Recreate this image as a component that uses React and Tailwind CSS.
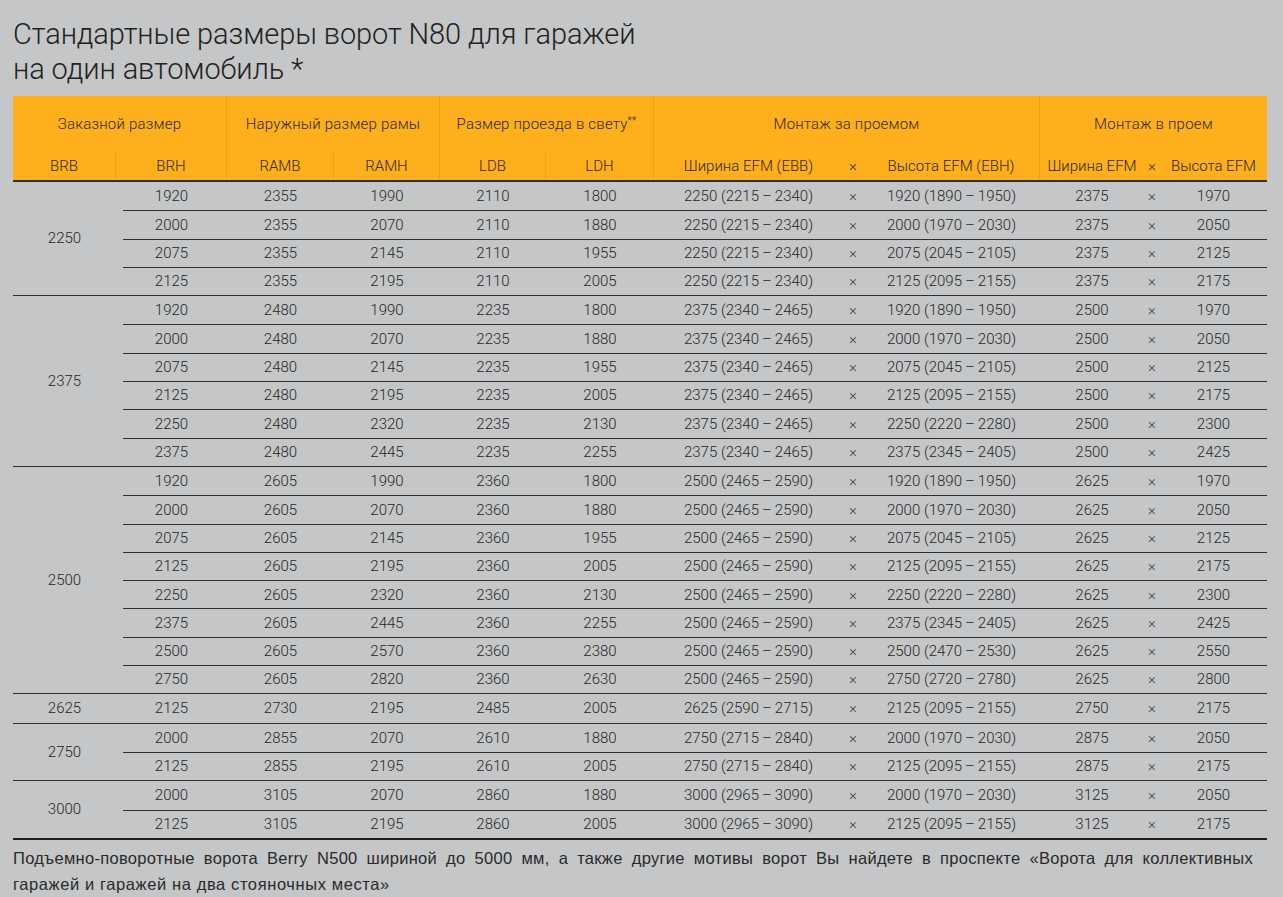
import React from 'react';

// Таблица стандартных размеров ворот N80
const groups = [
  { brb: 2250, brh: [1920, 2000, 2075, 2125] },
  { brb: 2375, brh: [1920, 2000, 2075, 2125, 2250, 2375] },
  { brb: 2500, brh: [1920, 2000, 2075, 2125, 2250, 2375, 2500, 2750] },
  { brb: 2625, brh: [2125] },
  { brb: 2750, brh: [2000, 2125] },
  { brb: 3000, brh: [2000, 2125] },
];

const range = (v, lo, hi) => `${v} (${v - lo}\u2009–\u2009${v + hi})`;

const HEAD_COLS = 'grid grid-cols-[103px_111px_107px_106px_106px_108px_189px_20px_177px_104px_16px_107px]';
const BODY_COLS = 'grid grid-cols-[104px_107px_106px_106px_108px_189px_20px_177px_104px_16px_107px]';

const Row = ({ brb, brh, first }) => {
  const cells = [
    brh,
    brb + 105,
    brh + 70,
    brb - 140,
    brh - 120,
    range(brb, 35, 90),
    '×',
    range(brh, 30, 30),
    brb + 125,
    '×',
    brh + 50,
  ];
  return (
    <div className={`${BODY_COLS} h-[28.3px] items-center ${first ? '' : 'border-t border-[#2e2e2e]'}`}>
      {cells.map((c, i) => (
        <div
          key={i}
          className={`text-center whitespace-nowrap ${i === 0 ? 'pr-[7px]' : ''} ${c === '×' ? 'text-[#3a3a3a]' : ''}`}
        >
          {c}
        </div>
      ))}
    </div>
  );
};

export default function App() {
  return (
    <div
      className="w-[1283px] h-[897px] bg-[#c5c6c8] text-[#262626] overflow-hidden"
      style={{ fontFamily: 'Roboto, "Liberation Sans", "Noto Sans", sans-serif' }}
    >
      <div className="ml-[13px] w-[1254px]">
        {/* Title */}
        <h1 className="pt-[17px] text-[29px] leading-[35px] font-light text-[#222] tracking-[-0.1px]">
          Стандартные размеры ворот N80 для гаражей
          <br />
          на один автомобиль *
        </h1>

        {/* Table head */}
        <div className="mt-[9px] bg-[#fdb01b] text-[15px] font-light text-[#33291a] tracking-[0.2px] border-b-2 border-[#3a3020]">
          <div className={`${HEAD_COLS} h-[56px] items-center`}>
            <div className="col-span-2 text-center self-stretch flex items-center justify-center border-r border-[#eda516]">
              Заказной размер
            </div>
            <div className="col-span-2 text-center self-stretch flex items-center justify-center border-r border-[#eda516]">
              Наружный размер рамы
            </div>
            <div className="col-span-2 text-center self-stretch flex items-center justify-center border-r border-[#eda516]">
              Размер проезда в свету<span className="text-[10px] relative -top-[4px]">**</span>
            </div>
            <div className="col-span-3 text-center self-stretch flex items-center justify-center border-r border-[#eda516]">
              Монтаж за проемом
            </div>
            <div className="col-span-3 text-center self-stretch flex items-center justify-center">
              Монтаж в проем
            </div>
          </div>
          <div className={`${HEAD_COLS} h-[28px] items-stretch`}>
            {[
              ['BRB', true],
              ['BRH', true],
              ['RAMB', true],
              ['RAMH', true],
              ['LDB', true],
              ['LDH', true],
              ['Ширина EFM (EBB)', false],
              ['×', false],
              ['Высота EFM (EBH)', true],
              ['Ширина EFM', false],
              ['×', false],
              ['Высота EFM', false],
            ].map(([label, div], i) => (
              <div
                key={i}
                className={`flex items-center justify-center whitespace-nowrap tracking-normal ${div ? 'border-r border-[#eda516]' : ''}`}
              >
                {label}
              </div>
            ))}
          </div>
        </div>

        {/* Table body */}
        <div className="text-[15px] font-light border-b-2 border-[#1e1e1e]">
          {groups.map((g, gi) => (
            <div key={g.brb} className={`flex ${gi === 0 ? '' : 'border-t border-[#2e2e2e]'}`}>
              <div className="w-[103px] flex items-center justify-center">{g.brb}</div>
              <div className="ml-[7px] flex-1">
                {g.brh.map((h, i) => (
                  <Row key={h} brb={g.brb} brh={h} first={i === 0} />
                ))}
              </div>
            </div>
          ))}
        </div>

        {/* Footnote — первая строка выровнена по ширине */}
        <div
          className="mt-[5px] text-[16.5px] leading-[26px] tracking-[0.6px] text-[#2a2a2a]"
          style={{ fontFamily: '"Liberation Sans", Arial, sans-serif' }}
        >
          <p className="w-[1240px] whitespace-nowrap text-justify [text-align-last:justify] tracking-[0.3px]">
            Подъемно-поворотные ворота Berry N500 шириной до 5000 мм, а также другие мотивы ворот Вы найдете в проспекте «Ворота для коллективных
          </p>
          <p>гаражей и гаражей на два стояночных места»</p>
        </div>
      </div>
    </div>
  );
}
